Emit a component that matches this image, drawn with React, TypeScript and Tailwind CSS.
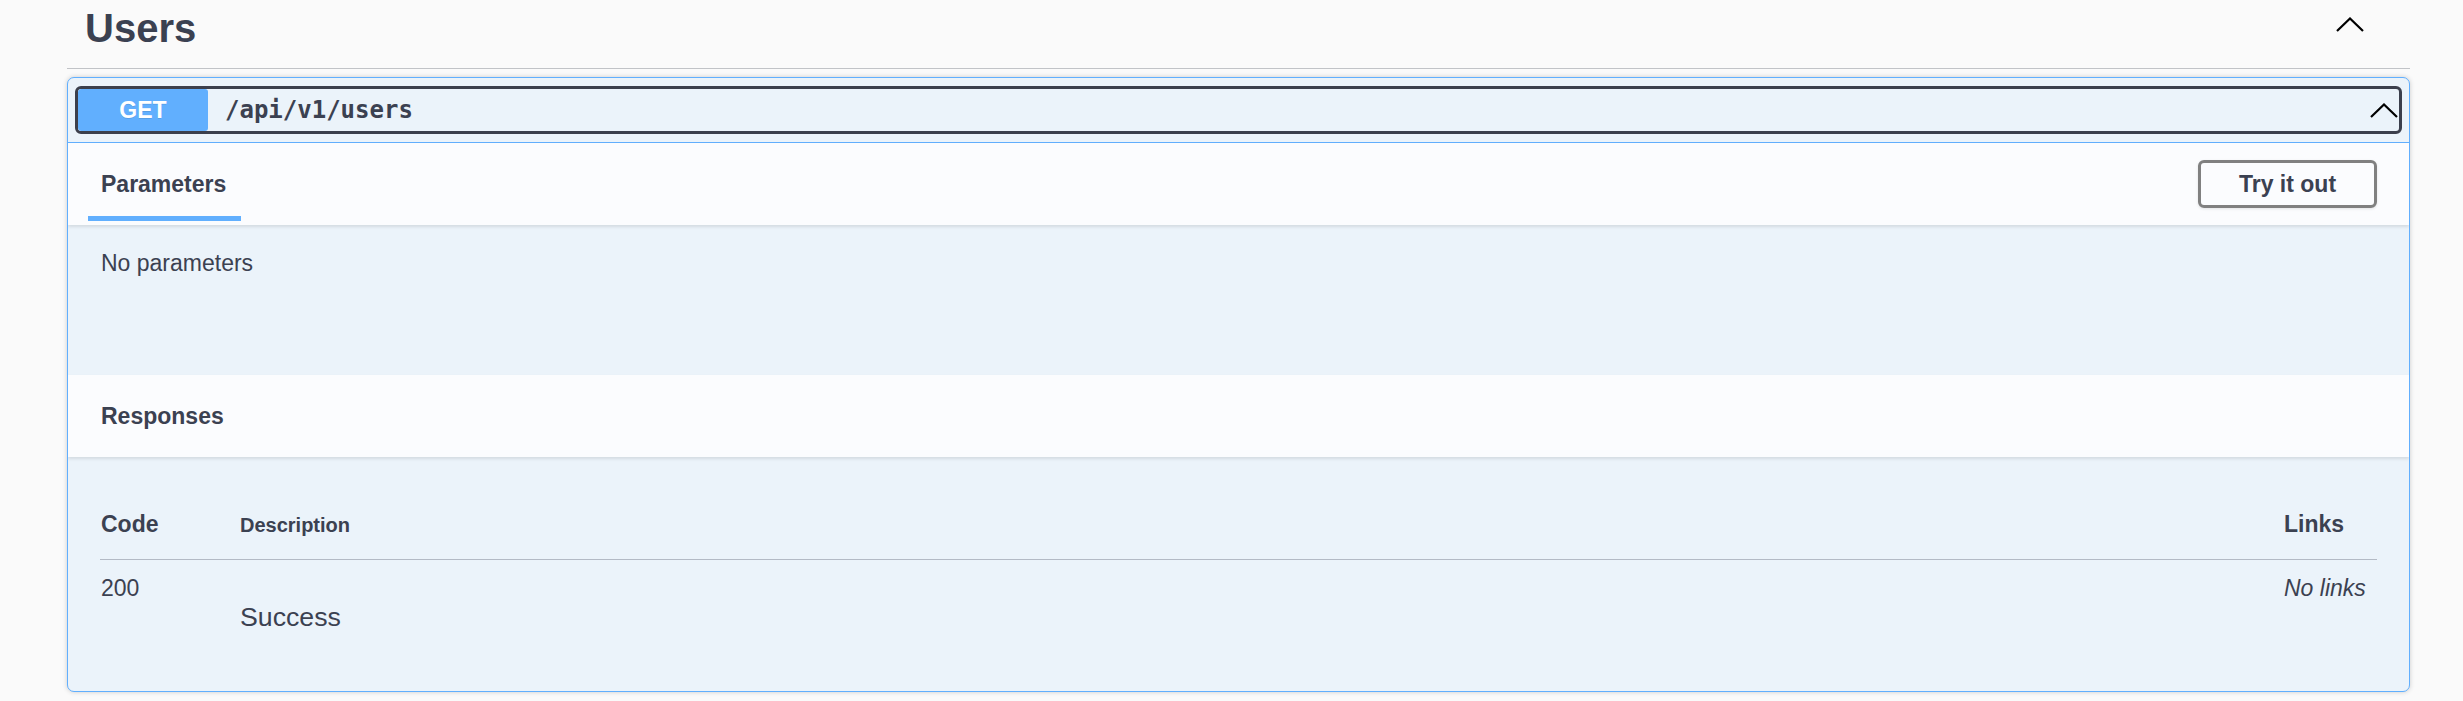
import React from "react";

function Chevron() {
  return (
    <svg width="28" height="15" viewBox="0 0 28 15" className="block">
      <polyline points="1,14 14,1.5 27,14" fill="none" stroke="#000" strokeWidth="2.2" />
    </svg>
  );
}

export default function App() {
  return (
    <div className="min-h-screen bg-[#fafafa] font-['Liberation_Sans',Arial,sans-serif] text-[#3b4151]">
      <div className="pl-[67px] pr-[53px]">
        {/* tag heading */}
        <div className="h-[69px] border-b border-[#c1c3c7] flex items-start justify-between pl-[18px] pr-[46px]">
          <h3 className="pt-[5px] text-[40px] leading-[46px] font-bold">Users</h3>
          <div className="mt-[17px]">
            <Chevron />
          </div>
        </div>

        {/* opblock */}
        <div className="mt-[8px] border border-[#61affe] rounded-[7px] bg-[#ebf3fa] shadow-[0_0_5px_rgba(0,0,0,0.19)] overflow-hidden">
          {/* summary */}
          <div className="px-[7px] py-[8px] border-b border-[#61affe]">
            <div className="h-[48px] border-[3px] border-[#3b3f4c] rounded-[6px] flex items-center overflow-hidden">
              <div className="h-full w-[130px] bg-[#61affe] rounded-[3px] flex items-center justify-center text-white font-bold text-[23px] [text-shadow:0_1px_0_rgba(0,0,0,0.1)]">
                GET
              </div>
              <div className="ml-[17px] font-['DejaVu_Sans_Mono',monospace] font-bold text-[24px] text-[#3b4151]">
                /api/v1/users
              </div>
              <div className="flex-1" />
              <div className="mr-[1px] mt-[1px]">
                <Chevron />
              </div>
            </div>
          </div>

          {/* parameters header */}
          <div className="relative z-10 h-[82px] bg-[#fbfcfe] shadow-[0_2px_3px_rgba(0,0,0,0.1)] flex items-center justify-between pl-[20px] pr-[32px]">
            <div className="relative pl-[13px] pr-[15px]">
              <h4 className="text-[23px] leading-[28px] font-bold">Parameters</h4>
              <div className="absolute left-0 right-0 top-[46px] h-[5px] bg-[#61affe]" />
            </div>
            <button className="w-[179px] h-[48px] border-[3px] border-[#808080] rounded-[6px] bg-transparent font-bold text-[23px] leading-[28px] text-[#3b4151] shadow-[0_1px_3px_rgba(0,0,0,0.1)]">
              Try it out
            </button>
          </div>

          {/* parameters body */}
          <div className="h-[150px] pt-[24px] pl-[33px] text-[23px] leading-[28px]">No parameters</div>

          {/* responses header */}
          <div className="relative z-10 h-[82px] bg-[#fbfcfe] shadow-[0_2px_3px_rgba(0,0,0,0.1)] flex items-center pl-[33px]">
            <h4 className="text-[23px] leading-[28px] font-bold">Responses</h4>
          </div>

          {/* responses body */}
          <div className="h-[234px] pt-[53px] pl-[32px] pr-[32px]">
            <div className="flex items-baseline pb-[20px] border-b border-[#b3bac5] leading-[28px]">
              <div className="w-[140px] pl-[1px] text-[23px] font-bold">Code</div>
              <div className="flex-1 text-[20px] font-bold">Description</div>
              <div className="w-[93px] text-[23px] font-bold">Links</div>
            </div>
            <div className="flex items-start pt-[14px]">
              <div className="w-[140px] pl-[1px] text-[23px] leading-[28px]">200</div>
              <div className="flex-1">
                <p className="mt-[28px] text-[26.7px] leading-[30px]">Success</p>
              </div>
              <div className="w-[93px] text-[23px] leading-[28px] italic">No links</div>
            </div>
          </div>
        </div>
      </div>
    </div>
  );
}
